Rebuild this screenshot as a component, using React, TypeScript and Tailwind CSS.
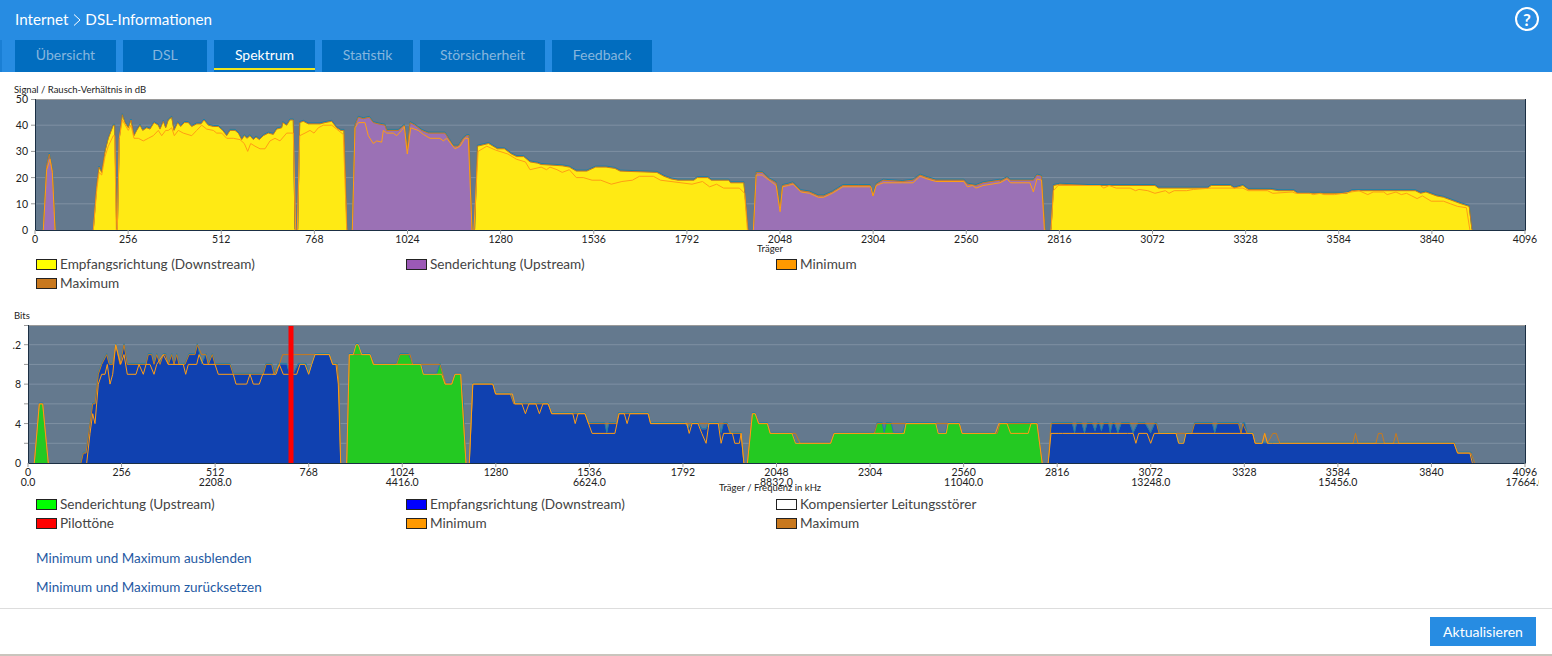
type Pt = [number, number]

// the data below was read off at different crops, so each run has its own x mapping
const left = (x: number) => x / 3
const mid = (x: number) => x / 2.851 + 450
const right = (x: number) => x / 2.841 + 1000

const pts = (map: (x: number) => number, raw: string): Pt[] =>
  raw
    .trim()
    .split(/\s+/)
    .map((p) => {
      const [x, v] = p.split(":").map(Number)
      return [map(x), v] as Pt
    })

interface Band {
  color: string
  top: Pt[]
  max?: Pt[]
  min: Pt[]
}

const snrBands: Band[] = [
  {
    color: "#9b71b5",
    top: pts(left, "130:0 140:25 148:29 157:23 166:0"),
    min: pts(left, "130:0 140:23 150:27 157:22 165:0"),
  },
  {
    color: "#ffea14",
    top: pts(left, "280:0 290:17 297:24 305:22 315:30 325:35 340:40 344:40 350:0"),
    min: pts(left, "280:0 290:15 297:22 305:21 315:28 325:32 340:36 344:36 349:0"),
  },
  {
    color: "#ffea14",
    top: pts(
      left,
      "352:0 358:35 367:44 375:41 385:39 393:42 402:36 410:38 420:40 428:38 440:39 450:38.5 462:41 475:40 480:38.5 490:41.5 497:39 505:42 515:43 522:38 533:41 542:39.5 553:41 565:41 575:39.5 590:40.5 603:40.5 612:42 625:40 640:39.5 655:39.5 668:38 680:36 690:38 705:38 715:37 725:34.5 733:36 741:35 750:36 760:34.5 768:35.5 778:34.5 790:36 805:37 820:36.5 830:38.5 845:39 848:41 860:40 870:42 880:42 885:0",
    ),
    min: pts(
      left,
      "352:0 358:35 367:42 385:38 393:40 402:35 415:35 430:34 445:35 460:36 475:38 485:36 497:38 505:38 515:39 523:36 535:38 550:37 575:36 590:38 605:40 620:38.5 640:38 650:37 665:37 680:35 700:35 720:34.5 733:33 743:30 752:33 765:32 780:31 795:31 810:34 825:35 840:34 860:37 880:37 887:0",
    ),
  },
  {
    color: "#ffea14",
    top: pts(left, "893:0 899:41 910:41.5 925:40.5 960:40.5 975:41 995:41.5 1010:39 1022:38 1032:38 1041:0"),
    min: pts(left, "892:0 899:36 915:37 930:38 942:37 955:39 970:40 995:40 1010:38.5 1030:36.5 1040:0"),
  },
  {
    color: "#9b71b5",
    top: pts(
      left,
      "1057:0 1065:40 1075:43 1090:42.5 1108:43 1120:41 1135:40.5 1155:40 1160:38 1195:38 1213:40 1222:31 1230:41 1245:40 1265:38 1285:37 1335:37 1350:34 1360:32 1375:32 1390:35 1400:36 1407:36 1416:0",
    ),
    min: pts(
      left,
      "1057:0 1065:39 1075:41 1095:41 1105:36 1120:33 1130:34 1145:33.5 1150:38 1160:37 1180:37 1190:36 1205:38 1213:39.5 1222:29 1232:39 1255:38 1270:36.5 1290:35 1320:35 1330:34 1340:35 1365:31 1380:32 1395:35 1405:35 1416:0",
    ),
  },
  {
    color: "#ffea14",
    top: pts(
      mid,
      "70:0 78:32 95:32.5 110:33 135:31 155:31 175:29 190:28 210:28 228:26 250:25.5 260:25 320:24.5 340:24 360:22.5 390:22.5 415:24 445:24 470:23.5 485:22.5 590:22 610:20.5 630:19.5 650:19 695:19 705:20 735:20 745:19 795:19 800:18 838:18 850:0",
    ),
    min: pts(
      mid,
      "68:0 80:30 105:32 130:30.5 165:29 190:27 215:26 228:23 260:24 275:23 285:24 305:23 320:22 340:23 360:20 380:20 405:19 430:19 460:17.5 490:18.5 520:19 540:20.5 580:20.5 600:19 630:18.5 690:17.5 720:18.5 740:16.5 760:17.5 780:16 825:16 840:14 848:0",
    ),
  },
  {
    color: "#9b71b5",
    top: [
      ...pts(
        mid,
        "865:0 873:22 890:22 910:19.5 930:18 941:8 948:17 965:17.5 978:18 1000:15 1025:14.5 1050:13 1065:13 1090:14.5 1120:17 1165:17 1198:17 1206:13 1215:17.5 1235:19 1290:18.5 1320:19 1340:21 1360:20 1385:19 1465:19 1475:17.5 1500:17 1520:18 1568:19",
      ),
      ...pts(right, "0:18.5 20:20 30:19 95:19 105:21 118:20.5 128:0"),
    ],
    min: [
      ...pts(
        mid,
        "865:0 873:21 890:21 910:19 930:17 941:7 948:16.5 965:17 978:17.5 1000:14.5 1025:14 1050:12.5 1065:12.5 1090:14 1120:16.5 1200:16.5 1206:13 1215:17 1235:18 1290:18 1320:18 1340:20.5 1360:19.5 1385:18.5 1465:18.5 1475:16.5 1490:17 1500:16 1520:17 1568:18",
      ),
      ...pts(right, "0:18 20:19.5 30:18 85:18 95:14.5 105:19.5 118:19 126:0"),
    ],
  },
  {
    color: "#ffea14",
    top: pts(
      right,
      "145:0 152:17 170:17.5 250:17 440:17 450:16 590:16 600:17 655:17 665:16 690:17 705:15.5 770:15.5 790:15 835:15 845:14 985:14 1000:15 1180:15 1195:14 1210:14.5 1240:13 1260:12.5 1290:11 1310:10 1333:9 1341:0",
    ),
    min: pts(
      right,
      "145:0 152:15 165:17 285:17 295:16 310:17 330:16 370:16 385:15 395:15.5 420:15 440:14 470:15 480:14 495:15 530:15 550:15.5 600:16 690:16 705:15 760:15 775:14 830:14.5 840:14 880:14 890:13.5 910:14 920:13.5 950:13.5 975:14 1020:15 1045:13.5 1060:14.5 1090:14.5 1100:13.5 1125:14.5 1140:13.5 1155:14 1170:13 1185:12 1200:13 1225:11 1260:11 1280:10 1300:9 1325:8.5 1335:0",
    ),
  },
]

const bitBands: Band[] = [
  {
    color: "#24c922",
    top: pts(left, "103:0 118:6 128:6 145:0"),
    min: pts(left, "103:0 118:6 128:6 145:0"),
  },
  {
    color: "#1041b0",
    top: pts(
      left,
      "243:0 250:1 258:1 270:4 278:6 285:6 295:9 305:10 320:11 328:10 338:10 347:12 360:10 372:12 382:10 438:10 445:11 455:11 462:10 470:11 480:10 490:11 497:11 505:10 515:11 522:10 530:11 537:10 555:10 567:11 585:11 592:12 605:10 618:11 625:10 637:11 645:10 690:10 700:9 790:9 798:10 815:10 825:9 835:10 860:10 868:9 880:9 895:10 918:10 926:9 945:11 988:11 998:10 1012:10 1017:8 1022:0",
    ),
    max: pts(
      left,
      "243:0 250:1 258:1 270:4 278:6 285:6 295:9 305:10 320:11 328:10 338:10 347:12 360:10 372:12 382:10 438:10 445:11 455:11 462:10 470:11 480:10 490:11 497:11 505:10 515:11 522:10 530:11 537:10 555:10 567:11 585:11 592:12 605:11 618:11 625:10 637:11 645:10 690:10 700:9 790:9 798:10 815:10 822:9 838:10 848:11 945:11 988:11 998:10 1012:10 1017:8 1022:0",
    ),
    min: pts(
      left,
      "260:0 270:3 278:5 285:4 295:8 305:9 315:9 322:10 330:8 338:9 347:12 362:10 372:11 382:9 408:9 417:10 430:9 438:10 450:10 462:9 470:10 490:11 505:10 550:10 557:9 565:10 590:10 597:11 610:10 645:10 655:9 700:9 708:8 740:8 750:9 760:8 778:8 788:9 815:9 828:9 838:10 850:9 858:9 870:9 882:9 890:9 900:10 915:10 926:9 935:10 945:11 988:11 998:10 1008:10 1015:8 1022:0",
    ),
  },
  {
    color: "#24c922",
    top: pts(
      left,
      "1040:0 1048:11 1060:11 1068:12 1075:12 1085:11 1110:11 1122:10 1190:10 1200:11 1225:11 1238:10 1262:10 1272:9 1310:9 1320:10 1335:8 1355:8 1365:9 1382:9 1390:6 1398:0",
    ),
    max: pts(left, "1040:0 1048:11 1110:11 1122:10 1190:10 1200:11 1230:11 1238:10 1320:10 1337:8 1355:8 1365:9 1382:9 1398:0"),
    min: pts(
      left,
      "1040:0 1048:11 1060:11 1068:12 1075:12 1085:11 1110:11 1120:10 1262:10 1270:9 1325:9 1335:8 1355:8 1365:9 1382:9 1398:0",
    ),
  },
  {
    color: "#1041b0",
    top: pts(
      mid,
      "55:0 65:8 122:8 130:7 172:7 182:6 280:6 290:5 385:5 395:4 441:4 447:3 453:4 475:4 480:5 565:5 572:4 670:4 680:3.5 690:4 708:4 718:3.4 730:3.4 738:4 765:4 773:3 780:4 790:4 797:3 830:3 838:0",
    ),
    max: pts(mid, "55:0 65:8 122:8 130:7 172:7 182:6 280:6 290:5 385:5 395:4 475:4 480:5 565:5 572:4 790:4 800:3 830:3 838:0"),
    min: pts(
      mid,
      "55:0 65:8 122:8 130:7 178:7 185:6 205:6 215:5 225:6 245:6 255:5 265:6 280:6 290:5 350:5 357:4 365:5 385:5 405:3 470:3 482:5 497:5 505:4 513:5 565:5 572:4 675:4 682:3 690:4 707:4 718:3 730:2 738:4 765:4 773:2 780:3 805:3 812:2 825:2 830:3 838:0",
    ),
  },
  {
    color: "#24c922",
    top: [
      ...pts(
        mid,
        "848:0 862:5 870:5 880:4 905:4 913:3 975:3 985:2 1085:2 1095:3 1210:3 1218:4 1232:4 1238:3 1244:4 1258:4 1264:3 1290:3 1300:4 1385:4 1392:3 1412:3 1420:4 1452:4 1460:3 1560:3 1568:4",
      ),
      ...pts(right, "0:4 105:4 120:0"),
    ],
    max: [
      ...pts(mid, "848:0 862:5 870:5 880:4 905:4 913:3 985:3 998:2 1085:2 1095:3 1210:3 1218:4 1452:4 1460:3 1560:3 1568:4"),
      ...pts(right, "0:4 105:4 120:0"),
    ],
    min: [
      ...pts(
        mid,
        "848:0 862:5 870:5 880:4 905:4 913:3 975:3 985:2 1085:2 1095:3 1295:3 1300:4 1385:4 1392:3 1415:3 1420:4 1452:4 1460:3 1555:3 1565:4",
      ),
      ...pts(right, "0:4 20:4 30:3 80:3 88:4 105:4 120:0"),
    ],
  },
  {
    color: "#1041b0",
    top: pts(
      right,
      "137:0 145:3.5 148:4 205:4 212:3 218:4 232:4 240:3 248:4 262:4 270:3.2 277:4 282:4 288:3.2 295:4 308:4 313:3 320:4 325:4 335:3 345:4 368:4 378:3 392:4 412:4 428:3 440:4 445:4 452:3 500:3 506:2 522:2 528:3 545:3 553:4 603:4 610:3 618:4 678:4 685:3 690:4 695:4 702:3 718:3 725:2 795:2 1290:2 1300:1 1338:1 1345:0",
    ),
    max: pts(
      right,
      "137:0 145:4 445:4 452:3 500:3 506:3 545:3 553:4 678:4 685:3 690:4 702:3 718:3 725:2 745:2 752:3 760:2 775:3 785:3 795:2 1003:2 1010:3 1017:2 1068:2 1075:3 1085:3 1092:2 1118:2 1125:3 1133:2 1290:2 1300:1 1338:1 1348:0",
    ),
    min: pts(
      right,
      "137:0 145:3 165:3 178:3 362:3 378:3 386:2 394:3 418:3 428:2 438:3 500:3 508:2 522:2 528:3 685:3 718:3 725:2 745:2 752:3 760:2 775:2 795:2 1290:2 1300:1 1335:1 1342:0",
    ),
  },
]

interface ChartProps {
  viewTop: number
  height: number
  x0: number
  x1: number
  yTop: number
  yBottom: number
  vMax: number
  grid: number[]
  yLabels: [number, string][]
  bands: Band[]
  pilot?: boolean
  kHz?: boolean
  axisTitle: string
  axisTitleX: number
  axisTitleY: number
}

const Chart = ({ viewTop, height, x0, x1, yTop, yBottom, vMax, grid, yLabels, bands, pilot, kHz, axisTitle, axisTitleX, axisTitleY }: ChartProps) => {
  const yOf = (v: number) => yBottom - (v / vMax) * (yBottom - yTop)
  const line = (list: Pt[]) => list.map(([x, v]) => `${x.toFixed(1)},${yOf(v).toFixed(1)}`).join(" ")
  const step = (x1 - x0) / 16

  return (
    <svg width={1539} height={height} viewBox={`0 ${viewTop} 1539 ${height}`} className="block">
      <rect x={x0} y={yTop} width={x1 - x0} height={yBottom - yTop} fill="#64798e" />
      {grid.map((v) => (
        <g key={v}>
          <line x1={x0} x2={x1} y1={yOf(v)} y2={yOf(v)} stroke="#7f90a3" />
          <line x1={x0 - 4} x2={x0} y1={yOf(v)} y2={yOf(v)} stroke="#999" />
        </g>
      ))}
      {bands.map((b, i) => (
        <polygon key={i} points={line(b.top)} fill={b.color} />
      ))}
      {bands.map((b, i) => (
        <g key={i} fill="none" strokeWidth={1}>
          <polyline points={line(b.top)} stroke="#1f7fa6" transform="translate(0 -1)" />
          <polyline points={line(b.max ?? b.top)} stroke="#c87a1e" />
          <polyline points={line(b.min)} stroke="#ff9d14" />
        </g>
      ))}
      {pilot && <rect x={288.5} y={yTop} width={5} height={yBottom - yTop} fill="#ff0000" />}
      <path d={`M${x0 - 4} ${yTop + 0.5}H${x1 + 0.5}`} stroke="#9a9a9a" fill="none" />
      <path d={`M${x0 + 0.5} ${yTop}V${yBottom + 0.5}H${x1 + 0.5}V${yTop}`} stroke="#1b2f44" fill="none" />
      {Array.from({ length: 17 }, (_, i) => i).map((i) => {
        const x = x0 + i * step
        return (
          <g key={i} fontFamily="Lato, sans-serif" fontSize={10.5} fill="#222" textAnchor="middle">
            <line x1={x} x2={x} y1={yBottom} y2={yBottom + 4} stroke="#999" />
            <text x={x} y={yBottom + 13}>
              {i * 256}
            </text>
            {kHz && i % 2 === 0 && (
              <text x={x} y={yBottom + 23}>
                {(i * 1104).toFixed(1)}
              </text>
            )}
          </g>
        )
      })}
      {yLabels.map(([v, label]) => (
        <text key={v} x={x0 - 7} y={yOf(v) + 4} textAnchor="end" fontFamily="Lato, sans-serif" fontSize={10.5} fill="#222">
          {label}
        </text>
      ))}
      <text x={axisTitleX} y={axisTitleY} textAnchor="middle" fontFamily="Lato, sans-serif" fontSize={9.5} fill="#222">
        {axisTitle}
      </text>
    </svg>
  )
}

const Legend = ({ items }: { items: [string, string][] }) => (
  <div className="grid grid-cols-[370px_370px_370px] pl-9 text-[13.6px] leading-[19px] text-[#444]">
    {items.map(([color, label]) => (
      <div key={label} className="flex items-center gap-[3px] h-[19px]">
        <span className="w-[21px] h-[11px] border border-[#222]" style={{ backgroundColor: color }} />
        <span>{label}</span>
      </div>
    ))}
  </div>
)

const tabs = ["Übersicht", "DSL", "Spektrum", "Statistik", "Störsicherheit", "Feedback"]
const tabWidths = ["w-[101px]", "w-[84px]", "w-[101px]", "w-[91px]", "w-[125px]", "w-[100px]"]

export default function App() {
  return (
    <div className="w-[1552px] h-[656px] overflow-hidden bg-white flex flex-col font-['Lato',sans-serif]">
      <header className="h-[72px] bg-[#278ce2] relative">
        <div className="flex items-center h-10 pl-[15px] pb-[1px] text-[15.2px] text-white">
          <span>Internet</span>
          <svg width="17" height="16" viewBox="0 0 17 16" fill="none" stroke="#fff" strokeWidth="1">
            <path d="M6 2.5l6 5.5-6 5.5" />
          </svg>
          <span>DSL-Informationen</span>
        </div>
        <div className="absolute right-[13px] top-[7px] w-6 h-6 rounded-full border-2 border-white flex items-center justify-center text-white text-[17px] font-bold leading-none">
          ?
        </div>
        <nav className="flex h-8">
          <div className="w-[2px] mr-[13px] bg-[#1a7fd4]" />
          <div className="flex gap-[7px]">
            {tabs.map((t, i) => (
              <div
                key={t}
                className={`${tabWidths[i]} relative flex items-center justify-center bg-[#016dbf] text-[14px] pb-[4px] ${
                  t === "Spektrum" ? "text-white" : "text-[#86b6de]"
                }`}
              >
                {t}
                {t === "Spektrum" && <span className="absolute left-0 right-0 bottom-[2px] h-[2px] bg-[#f0e61e]" />}
              </div>
            ))}
          </div>
        </nav>
      </header>

      <main className="flex-1 flex flex-col">
        <p className="mt-[12px] pl-[14px] h-[10px] text-[9.5px] leading-[12px] text-[#222]">Signal / Rausch-Verhältnis in dB</p>
        <Chart
          viewTop={94}
          height={160}
          x0={35}
          x1={1525}
          yTop={99}
          yBottom={230}
          vMax={50}
          grid={[10, 20, 30, 40]}
          yLabels={[
            [50, "50"],
            [40, "40"],
            [30, "30"],
            [20, "20"],
            [10, "10"],
            [0, "0"],
          ]}
          bands={snrBands}
          axisTitle="Träger"
          axisTitleX={770}
          axisTitleY={252}
        />
        <div className="mt-[1px]">
          <Legend
            items={[
              ["#ffff00", "Empfangsrichtung (Downstream)"],
              ["#9b59b6", "Senderichtung (Upstream)"],
              ["#ff9900", "Minimum"],
              ["#c8781e", "Maximum"],
            ]}
          />
        </div>

        <p className="mt-[17px] pl-[14px] h-[12px] text-[9.5px] leading-[12px] text-[#222]">Bits</p>
        <Chart
          viewTop={322}
          height={172}
          x0={28}
          x1={1525}
          yTop={325}
          yBottom={463}
          vMax={14}
          grid={[2, 4, 6, 8, 10, 12]}
          yLabels={[
            [12, ".2"],
            [8, "8"],
            [4, "4"],
            [0, "0"],
          ]}
          bands={bitBands}
          pilot
          kHz
          axisTitle="Träger / Frequenz in kHz"
          axisTitleX={770}
          axisTitleY={491}
        />
        <div className="mt-[1px]">
          <Legend
            items={[
              ["#00ff00", "Senderichtung (Upstream)"],
              ["#0000ff", "Empfangsrichtung (Downstream)"],
              ["#ffffff", "Kompensierter Leitungsstörer"],
              ["#ff0000", "Pilottöne"],
              ["#ff9900", "Minimum"],
              ["#c8781e", "Maximum"],
            ]}
          />
        </div>

        <div className="pl-9 mt-[15px] flex flex-col gap-[9px] text-[13.5px] leading-[20px] text-[#1f5aa3]">
          <a>Minimum und Maximum ausblenden</a>
          <a>Minimum und Maximum zurücksetzen</a>
        </div>
      </main>

      <footer className="h-[48px] border-t border-[#ddd] border-b-2 border-b-[#c9c5bd] flex justify-end items-start pt-2 pr-4">
        <button className="w-[106px] h-[29px] bg-[#278ce2] text-white text-[14px]">Aktualisieren</button>
      </footer>
    </div>
  )
}
